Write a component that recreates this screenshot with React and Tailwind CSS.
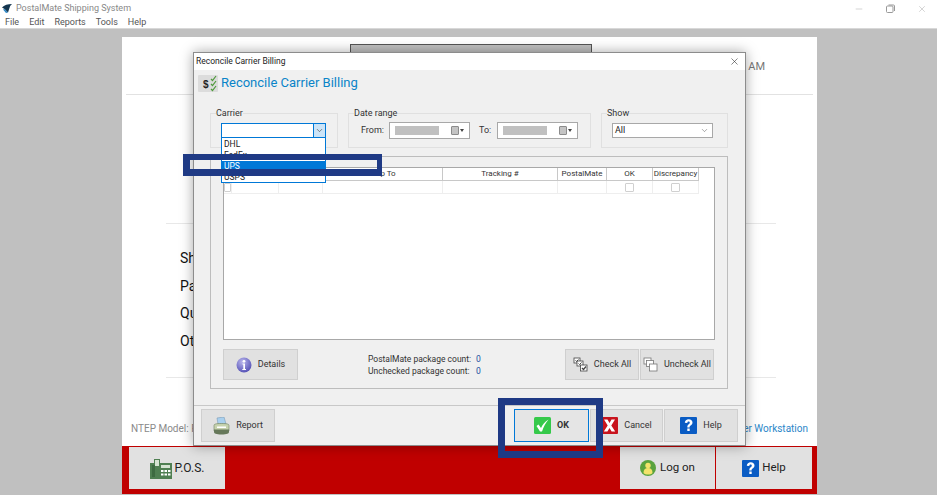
import React from "react";
import { X, Minus, ChevronDown } from "lucide-react";

const InfoIcon = () => (
  <svg width="16" height="16" viewBox="0 0 16 16"><defs><radialGradient id="ig" cx="0.4" cy="0.3" r="0.8"><stop offset="0" stopColor="#b9b6ec"/><stop offset="1" stopColor="#4a46b0"/></radialGradient></defs><circle cx="8" cy="8" r="7.5" fill="url(#ig)"/><circle cx="8" cy="4.300" r="1.400" fill="#fff"/><path d="M6.400 6.600h2.600v5.400h1v1H6.300v-1h1V7.600h-.9z" fill="#fff"/></svg>
);
const PrinterIcon = () => (
  <svg width="17" height="18" viewBox="0 0 17 18"><path d="M4 1l7-1 2 7H5z" fill="#a9d0ee" stroke="#7b9bb5" strokeWidth=".6"/><path d="M1 8.500C1 7 3 6.500 8.500 6.500S16 7 16 8.500V14H1z" fill="#c6d2ae" stroke="#6f8060" strokeWidth=".6"/><path d="M1 12.500h15V15c0 1.500-2 2.500-7.500 2.500S1 16.500 1 15z" fill="#66785a"/><rect x="4" y="9.500" width="9" height="1.500" fill="#fff"/></svg>
);
const CheckAllIcon = () => (
  <svg width="15" height="15" viewBox="0 0 15 15" fill="#fff" stroke="#444" strokeWidth=".8"><rect x="1" y="1" width="6" height="5"/><path d="M2.500 3.500l1 1 2-2" fill="none" strokeWidth="1"/><rect x="4" y="4" width="6" height="5"/><path d="M5.500 6.500l1 1 2-2" fill="none" strokeWidth="1"/><rect x="7.500" y="8" width="6.500" height="6"/><path d="M9 11l1.500 1.500 2.500-3" fill="none" strokeWidth="1.300"/></svg>
);
const UncheckAllIcon = () => (
  <svg width="15" height="15" viewBox="0 0 15 15" fill="#fff" stroke="#777" strokeWidth=".8"><rect x="1" y="1" width="7" height="6"/><rect x="3.500" y="3.500" width="7" height="6"/><rect x="6.500" y="7" width="7.500" height="7"/></svg>
);
const OkIcon = () => (
  <svg width="17" height="17" viewBox="0 0 17 17"><rect width="17" height="17" rx="1.500" fill="#35c94a"/><path d="M2.500 9l2-1.500 2.500 3.500c1.500-3.500 4-6.500 7.500-8.500-2.500 3-5 7-6.500 12H6z" fill="#fff"/></svg>
);
const CancelIcon = () => (
  <svg width="17" height="17" viewBox="0 0 17 17"><rect width="17" height="17" rx="1" fill="#c8141e"/><path d="M3 2.500h3.500l2 3.500 2-3.500H14l-3.700 6 3.900 6h-3.600l-2.100-3.500-2.100 3.500H2.800l3.900-6z" fill="#fff"/></svg>
);
const HelpIcon = ({ s = 17 }) => (
  <svg width={s} height={s} viewBox="0 0 17 17"><rect width="17" height="17" rx="1" fill="#0a5cc4"/><path d="M4.800 5.800C5 3.500 6.500 2.200 8.700 2.200c2.300 0 3.800 1.300 3.800 3.200 0 1.500-.8 2.300-1.900 3.100-.8.600-1 1-1 2H7.300c0-1.700.4-2.400 1.500-3.200.7-.5 1-.9 1-1.500 0-.7-.5-1.200-1.200-1.200-.8 0-1.200.5-1.300 1.400z" fill="#fff"/><rect x="7.300" y="11.500" width="2.400" height="2.500" fill="#fff"/></svg>
);
const UserIcon = () => (
  <svg width="16" height="16" viewBox="0 0 16 16"><circle cx="8" cy="8" r="8" fill="#5aa33e"/><circle cx="8" cy="5.500" r="2.700" fill="#f3e36a"/><path d="M3.500 13c0-3.500 1.500-5 4.500-5s4.500 1.500 4.500 5c-1 1-2.500 1.500-4.500 1.500S4.500 14 3.500 13z" fill="#f3e36a"/></svg>
);
const PosIcon = () => (
  <svg width="22" height="21" viewBox="0 0 22 21"><path d="M0 5h4V1h6v4h12v16H0z" fill="#4f7f52"/><rect x="2" y="7" width="3" height="12" fill="#3d6a41"/><rect x="5" y="2" width="4" height="6" fill="#d5e3d2"/><rect x="11" y="7" width="9" height="3" fill="#d5e3d2"/><g fill="#fff"><rect x="11" y="12" width="2.500" height="2"/><rect x="14.500" y="12" width="2.500" height="2"/><rect x="18" y="12" width="2.500" height="2"/><rect x="11" y="15.500" width="2.500" height="2"/><rect x="14.500" y="15.500" width="2.500" height="2"/><rect x="18" y="15.500" width="2.500" height="2"/></g></svg>
);
const BillingIcon = () => (
  <svg width="20" height="17" viewBox="0 0 20 17"><rect width="20" height="17" rx="1" fill="#dcdcdc"/><text x="5" y="12.500" fontSize="10" fontWeight="700" fill="#222" fontFamily="Liberation Sans">$</text><path d="M13 4l1.500 1.500L18 1M13 9l1.500 1.500L18 6M13 14l1.500 1.500L18 11" fill="none" stroke="#4f9a3c" strokeWidth="1.200"/></svg>
);
const Logo = () => (
  <svg width="10" height="9" viewBox="0 0 10 9"><path d="M0 3.500C2 1 6 0 10 0 9 1 8.500 1.500 8 2.500L6 8.500 2.500 5z" fill="#14364f"/><path d="M2.500 5L6 8.500 4 9 1 5.500z" fill="#2f86c2"/></svg>
);
const RestoreIcon = () => (
  <svg width="9" height="9" viewBox="0 0 9 9" fill="none" stroke="#999" strokeWidth="1"><rect x=".5" y="2" width="6.500" height="6.500" rx="1"/><path d="M2.500 1h5a1 1 0 0 1 1 1v5"/></svg>
);
const CalIcon = () => (
  <span className="flex items-center gap-[1px]">
    <span className="w-[8px] h-[9px] bg-[#c4c4c4] border border-[#8c8c8c] rounded-[1px]" />
    <span className="w-0 h-0 border-x-[2.500px] border-x-transparent border-t-[3px] border-t-[#444]" />
  </span>
);

const Btn = ({ icon, children, w, h = "h-[31px]", strong, focus }) => (
  <div className={`flex items-center justify-center gap-[6px] ${h} border ${focus ? "border-[#0078d7] bg-[#e5e5e5]" : "border-[#cfcfcf] bg-[#e1e1e1]"} ${w} text-[9px] text-[#333] ${strong ? "font-bold" : ""}`}>
    {icon}
    <span>{children}</span>
  </div>
);

const Group = ({ label, w, children }) => (
  <div className={`relative h-[35px] border border-[#e0e0e0] ${w} flex items-center`}>
    <span className="absolute -top-[6px] left-[5px] bg-[#f0f0f0] text-[9px] leading-[10px] text-[#333]">{label}</span>
    {children}
  </div>
);

const DateField = () => (
  <div className="w-[81px] h-[17px] bg-white border border-[#a8a8a8] flex items-center justify-between pl-[5px] pr-[5px]">
    <span className="w-[44px] h-[9px] bg-[#c0c0c0]" />
    <CalIcon />
  </div>
);

const cols = "grid grid-cols-[8px_47px_44px_120px_115px_49px_46px_46px]";
const HeadCell = ({ children }) => (
  <div className="h-[13px] bg-white border-r border-b border-[#c8c8c8] flex items-center justify-center text-[8px] text-[#333]">{children}</div>
);
const RowCell = ({ children }) => (
  <div className="h-[13px] border-r border-b border-[#eeeeee] flex items-center justify-center">{children}</div>
);
const Box = () => <span className="w-[9px] h-[9px] bg-white border border-[#d0d0d0] rounded-[1px]" />;

export default function App() {
  return (
    <div className="relative w-[937px] h-[495px] overflow-hidden bg-white flex flex-col font-['Roboto',sans-serif]">
      <header className="h-[29px] bg-white border-b border-[#d8d8d8] shrink-0">
        <div className="h-[15px] flex items-center pl-[2px] gap-[4px] text-[9px] text-[#888] pt-[2px]">
          <Logo />
          <span>PostalMate Shipping System</span>
          <div className="ml-auto flex items-center gap-[22px] pr-[10px] text-[#999]">
            <Minus size={10} strokeWidth={1} />
            <RestoreIcon />
            <X size={10} strokeWidth={1} />
          </div>
        </div>
        <nav className="flex gap-[10px] pl-[5px] pt-[1px] text-[9px] leading-[12px] text-[#555]">
          <span>File</span><span>Edit</span><span>Reports</span><span>Tools</span><span>Help</span>
        </nav>
      </header>

      <main className="flex-1 bg-[#c0c0c0] pt-[8px] pb-[1px] pl-[122px] pr-[120px] flex">
        <section className="w-[695px] flex flex-col">
          <div className="h-[409px] bg-white px-[4px] flex flex-col">
            <div className="h-[58px] border-b border-[#e2e2e2] flex items-start justify-end shrink-0 relative">
              <div className="absolute left-[224px] top-[7px] w-[242px] h-[20px] bg-[#c0c0c0] border border-[#555]" />
              <span className="mt-[22px] mr-[48px] text-[11px] text-[#777]">AM</span>
            </div>
            <div className="mt-[128px] ml-[40px] mr-[37px] border-t border-[#e8e8e8] pt-[26px] pl-[14px] flex flex-col gap-[10.500px] text-[14px] leading-[17px] text-[#111]">
              <span>Shipping</span>
              <span>Packages</span>
              <span>Quantity</span>
              <span>Other</span>
            </div>
            <div className="mt-[27px] ml-[40px] mr-[37px] border-t border-[#e8e8e8]" />
            <div className="mt-[44px] px-[5px] flex justify-between text-[10px] leading-[14px]">
              <span className="text-[#8a8a8a]">NTEP Model: PostalMate Scale</span>
              <span className="text-[#2a86c8]">Customer Workstation</span>
            </div>
          </div>
          <div className="flex-1 bg-[#c00000] pl-[7px] pr-[5px] pt-[1px] flex items-start justify-between">
            <div className="w-[96px] h-[42px] bg-[#e1e1e1] flex items-center justify-center gap-[3px] text-[12px] text-[#222]">
              <PosIcon /><span>P.O.S.</span>
            </div>
            <div className="flex gap-[1px]">
              <div className="w-[95px] h-[42px] bg-[#e1e1e1] flex items-center justify-center gap-[4px] text-[11.500px] text-[#222]">
                <UserIcon /><span>Log on</span>
              </div>
              <div className="w-[96px] h-[42px] bg-[#e1e1e1] flex items-center justify-center gap-[3px] text-[11.500px] text-[#222]">
                <HelpIcon s={17} /><span>Help</span>
              </div>
            </div>
          </div>
        </section>
      </main>

      {/* Modal dialog */}
      <div className="absolute left-[193px] top-[52px] w-[553px] h-[394px] border border-[#8c8c8c] bg-[#f0f0f0] flex flex-col shadow-[0_0_12px_rgba(0,0,0,0.35)]">
        <div className="h-[17px] bg-white flex items-center justify-between pl-[2px] pr-[5px] text-[8.500px] text-[#222] shrink-0">
          <span>Reconcile Carrier Billing</span>
          <X size={11} strokeWidth={1.2} className="text-[#222]" />
        </div>
        <div className="h-[25px] flex items-center pl-[4px] gap-[3px] pt-[1px] shrink-0">
          <BillingIcon />
          <span className="text-[13px] text-[#0a84c8]">Reconcile Carrier Billing</span>
        </div>

        <div className="mt-[18px] ml-[16px] flex gap-[10px] shrink-0">
          <Group label="Carrier" w="w-[128px]">
            <div className="relative ml-[10px] w-[105px] h-[16px] bg-white border border-[#0078d7] flex justify-end">
              <span className="w-[12px] bg-[#cce4f7] border-l border-[#0078d7] flex items-center justify-center">
                <ChevronDown size={9} strokeWidth={1.500} className="text-[#333]" />
              </span>
              <ul className="absolute -left-[1px] top-[13px] w-[105px] h-[46px] bg-white border border-[#0078d7] text-[8.500px] leading-[11px] text-[#222] pt-[1px]">
                <li className="pl-[2px]">DHL</li>
                <li className="pl-[2px]">FedEx</li>
                <li className="pl-[2px] bg-[#0078d7] text-white">UPS</li>
                <li className="pl-[2px]">USPS</li>
              </ul>
            </div>
          </Group>
          <Group label="Date range" w="w-[243px]">
            <span className="ml-[12px] w-[23px] text-[9px] text-[#333]">From:</span>
            <div className="ml-[5px]"><DateField /></div>
            <span className="ml-[9px] w-[13px] text-[9px] text-[#333]">To:</span>
            <div className="ml-[5px]"><DateField /></div>
          </Group>
          <Group label="Show" w="w-[127px]">
            <div className="ml-[10px] w-[101px] h-[15px] bg-white border border-[#a8a8a8] flex items-center justify-between pl-[2px] pr-[3px] text-[9px] text-[#222]">
              <span>All</span>
              <ChevronDown size={9} strokeWidth={1.200} className="text-[#444]" />
            </div>
          </Group>
        </div>

        <div className="mt-[8px] ml-[16px] w-[518px] h-[233px] border border-[#bdbdbd] px-[12px] pt-[10px] shrink-0 flex flex-col">
          <div className="w-[492px] h-[173px] bg-white border border-[#a8a8a8] shrink-0">
            <div className={cols}>
              <HeadCell /><HeadCell /><HeadCell /><HeadCell>Ship To</HeadCell><HeadCell>Tracking #</HeadCell><HeadCell>PostalMate</HeadCell><HeadCell>OK</HeadCell><HeadCell>Discrepancy</HeadCell>
            </div>
            <div className={cols}>
              <RowCell><Box /></RowCell><RowCell /><RowCell /><RowCell /><RowCell /><RowCell /><RowCell><Box /></RowCell><RowCell><Box /></RowCell>
            </div>
          </div>
          <div className="mt-[9px] flex items-center">
            <Btn icon={<InfoIcon />} w="w-[75px]">Details</Btn>
            <div className="ml-[70px] text-[8.500px] leading-[12px] text-[#333] w-[197px]">
              <div className="flex"><span className="w-[108px]">PostalMate package count:</span><span className="text-[#1a4fa0]">0</span></div>
              <div className="flex"><span className="w-[108px]">Unchecked package count:</span><span className="text-[#1a4fa0]">0</span></div>
            </div>
            <div className="flex gap-[1px]">
              <Btn icon={<CheckAllIcon />} w="w-[74px]">Check All</Btn>
              <Btn icon={<UncheckAllIcon />} w="w-[74px]">Uncheck All</Btn>
            </div>
          </div>
        </div>

        <div className="mt-[16px] flex-1 border-t border-[#c8c8c8] pt-[3px] pl-[7px] pr-[7px] flex items-start">
          <Btn icon={<PrinterIcon />} w="w-[74px]" h="h-[33px]">Report</Btn>
          <div className="ml-auto flex gap-[1px]">
            <Btn icon={<OkIcon />} w="w-[75px]" h="h-[33px]" strong focus>OK</Btn>
            <Btn icon={<CancelIcon />} w="w-[73px]" h="h-[33px]">Cancel</Btn>
            <Btn icon={<HelpIcon />} w="w-[74px]" h="h-[33px]">Help</Btn>
          </div>
        </div>
      </div>

      {/* Annotation boxes */}
      <div className="absolute left-[183px] top-[154px] w-[199px] h-[22px] border-[7px] border-t-[6px] border-r-[5px] border-[#1f3a85]" />
      <div className="absolute left-[498px] top-[398px] w-[105px] h-[60px] border-[7px] border-[#1f3a85]" />
    </div>
  );
}
